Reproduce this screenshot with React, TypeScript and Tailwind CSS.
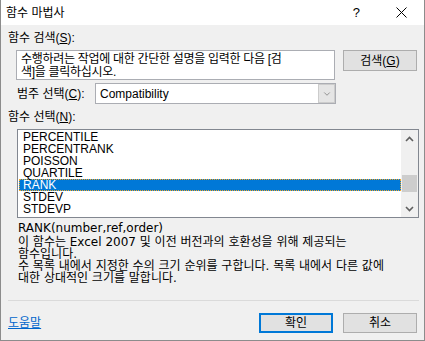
import { ChevronDown } from "lucide-react";

const FUNCS = ["PERCENTILE", "PERCENTRANK", "POISSON", "QUARTILE", "RANK", "STDEV", "STDEVP"];
const SELECTED = "RANK";

const font = { fontFamily: '"Liberation Sans", "Noto Sans CJK KR", sans-serif' };
const descFont = { fontFamily: '"DejaVu Sans", "Noto Sans CJK KR", sans-serif' };

function Btn({ children, primary = false }: { children: React.ReactNode; primary?: boolean }) {
  return (
    <div
      className={
        primary
          ? "flex h-[20px] w-[74px] items-center justify-center border-2 border-[#0078d7] bg-[#e1e1e1]"
          : "flex h-[20px] w-[74px] items-center justify-center border border-[#adadad] bg-[#e1e1e1]"
      }
    >
      {children}
    </div>
  );
}

function ScrollArrow({ up }: { up?: boolean }) {
  return (
    <svg width="9" height="6" viewBox="0 0 9 6" className="text-[#606060]">
      <path
        d={up ? "M1 5 L4.5 1.5 L8 5" : "M1 1 L4.5 4.5 L8 1"}
        fill="none"
        stroke="currentColor"
        strokeWidth="1.6"
      />
    </svg>
  );
}

export default function App() {
  return (
    <div
      className="flex h-[341px] w-[425px] flex-col border-x border-b border-[#8c8c8c] bg-[#f0f0f0] text-[12px] leading-[12px] text-black"
      style={font}
    >
      {/* title bar */}
      <div className="flex h-[25px] shrink-0 items-center bg-white pl-[5px]">
        <span className="flex-1">함수 마법사</span>
        <span className="mr-[36px] text-[13px]">?</span>
        <svg width="11" height="11" viewBox="0 0 11 11" className="mr-[17px]">
          <path d="M0.5 0.5 L10.5 10.5 M10.5 0.5 L0.5 10.5" stroke="#000" strokeWidth="1" />
        </svg>
      </div>

      <div className="flex flex-1 flex-col px-[6px]">
        <div className="mt-[7px] pl-[1px]">
          함수 검색(<u>S</u>):
        </div>

        <div className="mt-[6px] flex items-start pl-[9px]">
          <div className="h-[30px] w-[319px] border border-[#abadb3] bg-white px-[4px] pt-[2px] tracking-[-0.3px] whitespace-nowrap">
            <div className="h-[13px]">수행하려는 작업에 대한 간단한 설명을 입력한 다음 [검</div>
            <div className="h-[13px]">색]을 클릭하십시오.</div>
          </div>
          <div className="ml-[8px]">
            <div className="flex h-[21px] w-[74px] items-center justify-center border border-[#adadad] bg-[#e1e1e1]">
              검색(<u>G</u>)
            </div>
          </div>
        </div>

        <div className="mt-[3px] flex items-center pl-[10px]">
          <span className="w-[78px]">
            범주 선택(<u>C</u>):
          </span>
          <div className="flex h-[21px] w-[241px] items-center border border-[#abadb3] bg-white">
            <span className="flex-1 pl-[4px]">Compatibility</span>
            <div className="flex h-[19px] w-[17px] items-center justify-center border border-[#cccccc] bg-[#e5e5e5]">
              <ChevronDown size={10} strokeWidth={1.5} className="text-[#606060]" />
            </div>
          </div>
        </div>

        <div className="mt-[7px] pl-[1px]">
          함수 선택(<u>N</u>):
        </div>

        <div className="mt-[6px] ml-[10px] flex h-[89px] w-[402px] border border-[#828790] bg-white">
          <div className="flex-1 pt-[1px] pl-[1px]">
            {FUNCS.map((f) =>
              f === SELECTED ? (
                <div
                  key={f}
                  className="h-[12px] border border-dotted border-[#f5a623] bg-[#0078d7] pl-[3px] leading-[10px] text-white"
                >
                  {f}
                </div>
              ) : (
                <div key={f} className="h-[12px] pl-[4px]">
                  {f}
                </div>
              ),
            )}
          </div>
          <div className="flex w-[17px] flex-col items-center bg-[#f0f0f0]">
            <div className="flex h-[17px] w-full items-center justify-center">
              <ScrollArrow up />
            </div>
            <div className="mt-[28px] h-[17px] w-[15px] bg-[#cdcdcd]" />
            <div className="flex-1" />
            <div className="flex h-[17px] w-full items-center justify-center">
              <ScrollArrow />
            </div>
          </div>
        </div>

        <div className="mt-[4px] pl-[11px] whitespace-nowrap" style={descFont}>
          <div className="h-[12px]">RANK(number,ref,order)</div>
          <div className="mt-[2px]">
            <div className="h-[12px]">이 함수는 Excel 2007 및 이전 버전과의 호환성을 위해 제공되는</div>
            <div className="h-[12px]">함수입니다.</div>
            <div className="h-[12px]">수 목록 내에서 지정한 수의 크기 순위를 구합니다. 목록 내에서 다른 값에</div>
            <div className="h-[12px]">대한 상대적인 크기를 말합니다.</div>
          </div>
        </div>

        <div className="mt-[16px] ml-[1px] h-px w-[411px] bg-[#dadada]" />

        <div className="mt-[12px] flex items-center">
          <span className="flex-1 pl-[1px] text-[#0066cc] underline">도움말</span>
          <Btn primary>확인</Btn>
          <div className="ml-[10px] mr-[1px]">
            <Btn>취소</Btn>
          </div>
        </div>
      </div>
    </div>
  );
}
